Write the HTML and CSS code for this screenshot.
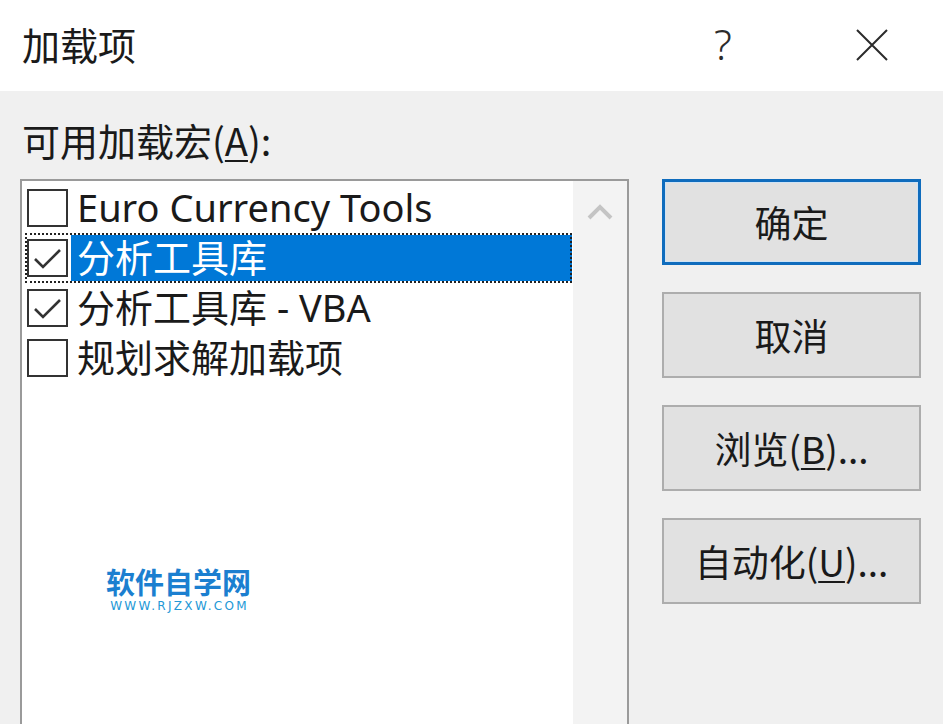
FILE: index.html
```html
<!DOCTYPE html>
<html lang="zh-CN">
<head>
<meta charset="utf-8">
<title>加载项</title>
<link rel="stylesheet" href="styles.css">
</head>
<body>
<div class="dialog">
  <div class="titlebar">
    <div class="title">加载项</div>
    <div class="help">?</div>
    <div class="close">
      <svg width="34" height="34" viewBox="0 0 34 34"><path d="M2 2 L32 32 M32 2 L2 32" stroke="#2b2b2b" stroke-width="2" fill="none"/></svg>
    </div>
  </div>
  <div class="content">
    <div class="left">
      <div class="label">可用加载宏(<u>A</u>):</div>
      <div class="listbox">
        <div class="items">
          <div class="row">
            <span class="cb"></span><span class="txt">Euro Currency Tools</span>
          </div>
          <div class="row focus">
            <span class="cb"><svg width="37" height="34" viewBox="0 0 37 34"><path d="M6 18 L14 26 L31 9" stroke="#333" stroke-width="2.6" fill="none"/></svg></span><span class="txt sel">分析工具库</span>
          </div>
          <div class="row">
            <span class="cb"><svg width="37" height="34" viewBox="0 0 37 34"><path d="M6 18 L14 26 L31 9" stroke="#333" stroke-width="2.6" fill="none"/></svg></span><span class="txt">分析工具库 - VBA</span>
          </div>
          <div class="row">
            <span class="cb"></span><span class="txt">规划求解加载项</span>
          </div>
        </div>
        <div class="scrollbar">
          <svg class="chev" width="26" height="18" viewBox="0 0 26 18"><path d="M2 15 L13 4 L24 15" stroke="#c4c4c4" stroke-width="4" fill="none"/></svg>
        </div>
        <div class="watermark">
          <div class="wm-cn">软件自学网</div>
          <div class="wm-en">WWW.RJZXW.COM</div>
        </div>
      </div>
    </div>
    <div class="buttons">
      <div class="btn default">确定</div>
      <div class="btn">取消</div>
      <div class="btn">浏览(<u>B</u>)...</div>
      <div class="btn">自动化(<u>U</u>)...</div>
    </div>
  </div>
</div>
</body>
</html>
```
FILE: styles.css
```css
html, body {
  margin: 0;
  padding: 0;
}
body {
  width: 943px;
  height: 724px;
  overflow: hidden;
  background: #f0f0f0;
  font-family: "Noto Sans CJK SC", "Noto Sans", sans-serif;
  color: #1a1a1a;
}
.dialog {
  height: 724px;
  overflow: hidden;
}
.titlebar {
  height: 91px;
  background: #ffffff;
  display: flex;
  align-items: center;
}
.title {
  font-size: 38px;
  padding-left: 22px;
  flex: 1;
  line-height: 1;
  margin-top: -4px;
}
.help {
  font-family: "Noto Sans", sans-serif;
  font-weight: 300;
  font-size: 42px;
  line-height: 1;
  color: #2b2b2b;
  width: 40px;
  text-align: center;
  margin-right: 112px;
  margin-top: -4px;
}
.close {
  width: 34px;
  height: 34px;
  margin-right: 54px;
  margin-top: -2px;
}
.content {
  display: flex;
  padding: 24px 22px 0 20px;
}
.left {
  width: 609px;
}
.label {
  font-size: 38px;
  line-height: 50px;
  padding-left: 2px;
  height: 64px;
}
.listbox {
  position: relative;
  width: 605px;
  height: 560px;
  border: 2px solid #9a9a9a;
  border-bottom: none;
  background: #fff;
  display: flex;
}
.items {
  flex: 1;
  padding-top: 2px;
}
.row {
  height: 50px;
  margin-left: 3px;
  margin-right: 1px;
  display: flex;
  align-items: center;
  box-sizing: border-box;
}
.row.focus {
  outline: 2px dotted #222;
  outline-offset: -2px;
}
.cb {
  width: 37px;
  height: 34px;
  border: 2px solid #333;
  background: #fff;
  margin-left: 2px;
  flex: none;
  display: block;
}
.cb svg {
  display: block;
}
.txt {
  font-family: "Noto Sans", "Noto Sans CJK SC", sans-serif;
  font-size: 38px;
  line-height: 48px;
  padding-left: 6px;
  margin-left: 3px;
  white-space: nowrap;
  margin-top: -2px;
}
.txt.sel {
  background: #0078d7;
  color: #fff;
  flex: 1;
  height: 46px;
  box-sizing: border-box;
  line-height: 44px;
  padding-bottom: 2px;
  margin-top: 0;
  align-self: center;
}
.scrollbar {
  width: 54px;
  background: #f3f3f3;
  display: flex;
  justify-content: center;
  padding-top: 22px;
  box-sizing: border-box;
}
.chev {
  display: block;
}
.watermark {
  position: absolute;
  left: 84px;
  top: 388px;
  text-align: center;
}
.wm-cn {
  font-family: "Liberation Sans", "Noto Sans CJK SC", sans-serif;
  font-size: 29px;
  font-weight: 700;
  color: #1b7fd0;
  line-height: 30px;
}
.wm-en {
  font-family: "DejaVu Sans", sans-serif;
  font-size: 12px;
  color: #2398d6;
  line-height: 13px;
  letter-spacing: 2.3px;
  margin-top: 1px;
  margin-left: -4px;
  margin-right: -6px;
  white-space: nowrap;
}
.buttons {
  margin-left: 33px;
  padding-top: 64px;
  display: flex;
  flex-direction: column;
  gap: 27px;
}
.btn {
  width: 259px;
  height: 86px;
  box-sizing: border-box;
  border: 2px solid #adadad;
  background: #e1e1e1;
  font-size: 37px;
  display: flex;
  align-items: center;
  justify-content: center;
  color: #1a1a1a;
}
.btn.default {
  border: 3px solid #0f6cbd;
  box-shadow: inset 0 0 0 1px #cfe3f5;
}
u {
  text-decoration-thickness: 2px;
  text-underline-offset: 4px;
}
```
